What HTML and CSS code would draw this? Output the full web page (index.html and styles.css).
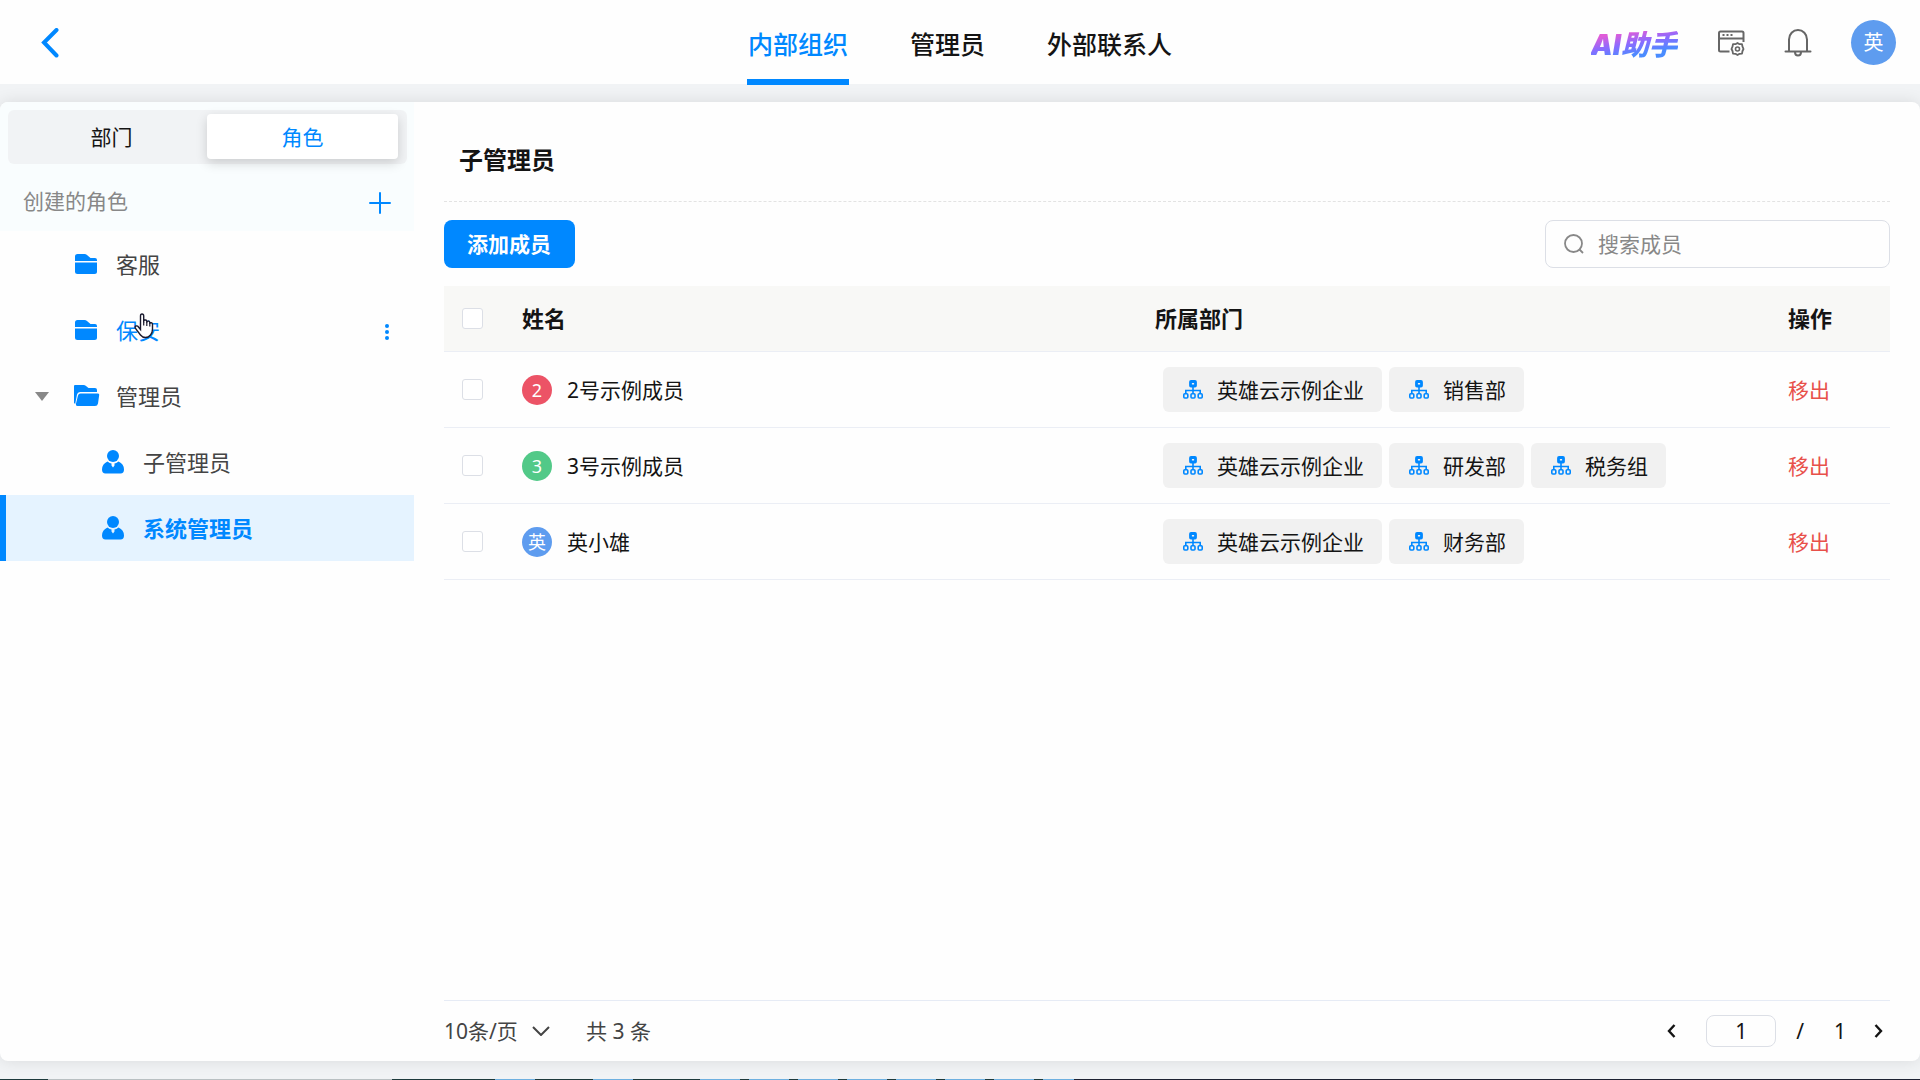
FILE: index.html
```html
<!DOCTYPE html>
<html lang="zh-CN">
<head>
  <meta charset="UTF-8">
  <meta name="viewport" content="width=device-width, initial-scale=1.0">
  <title>内部组织</title>
  <link rel="stylesheet" href="styles.css">
</head>
<body>
  <!-- shared icons -->
  <svg class="sprite" aria-hidden="true">
    <symbol id="icon-folder" viewBox="0 0 24 20">
      <path d="M1 7V2.500Q1 0 3.500 0H10.500Q12 0 13 1L16.500 4H21Q23 4 23 6V7Z"/>
      <path d="M1 8.500H23V17.500Q23 20 20.500 20H3.500Q1 20 1 17.500Z"/>
    </symbol>
    <symbol id="icon-folder-open" viewBox="0 0 26 22">
      <path d="M0 18V1Q0 0 1 0H9.500Q11 0 12 1L14.500 3H21Q23 3 23 5V7H6Q3.500 7 3 9.500L1.200 19Z"/>
      <path d="M6.500 8.500H24Q25.500 8.500 25.200 10L24 18.500Q23.500 21 21 21H3.500Q1.500 21 1.900 19L4 10.500Q4.500 8.500 6.500 8.500Z"/>
    </symbol>
    <symbol id="icon-user" viewBox="0 0 22 24">
      <circle cx="11" cy="6" r="6"/>
      <path d="M5.500 11.500Q8 13.500 9.500 13.500L9.500 15.500L11 17.500L12.500 15.500V13.500Q14 13.500 16.500 11.500Q22 14 22 19.500Q22 23.500 18.500 23.500H3.500Q0 23.500 0 19.500Q0 14 5.500 11.500Z"/>
    </symbol>
    <symbol id="icon-org" viewBox="0 0 20 19">
      <g fill="none" stroke="currentColor" stroke-width="1.600">
        <rect x="7.500" y="1.500" width="5" height="4.500" rx="0.500" stroke-width="2.800"/>
        <path d="M10 7V13.500M2.800 13.500V10.500H17.200V13.500"/>
        <rect x="0.800" y="13.800" width="4" height="4.200" rx="1"/>
        <rect x="8" y="13.800" width="4" height="4.200" rx="1"/>
        <rect x="15.200" y="13.800" width="4" height="4.200" rx="1"/>
      </g>
    </symbol>
  </svg>

  <header class="topbar">
    <button class="icon-btn back-btn" aria-label="返回">
      <svg width="18" height="30" viewBox="0 0 18 30"><path d="M15.500 2L3 14.500L15.500 27.500" fill="none" stroke="currentColor" stroke-width="4" stroke-linecap="round"/></svg>
    </button>
    <nav class="main-nav">
      <a href="#" class="active">内部组织</a>
      <a href="#">管理员</a>
      <a href="#">外部联系人</a>
    </nav>
    <div class="tools">
      <a href="#" class="ai-link">AI助手</a>
      <button class="icon-btn" aria-label="应用设置">
        <svg width="28" height="26" viewBox="0 0 28 26" fill="none" stroke="currentColor" stroke-width="2">
          <path d="M12.500 21.500H3.500Q2 21.500 2 20V3Q2 1.500 3.500 1.500H25Q26.500 1.500 26.500 3V12M2 8.500H26.500"/>
          <path d="M5.500 5H7.500M9.500 5H11.500M13.500 5H15.500"/>
          <path d="M20.500 13L22.500 14.200L25 14.200L25.500 16.600L26.500 19L25.500 21L25 23.600L22.500 23.800L20.500 25L18.500 23.800L16 23.600L15.500 21L14.500 19L15.500 16.600L16 14.200L18.500 14.200Z" stroke-linejoin="round" stroke-width="1.800"/>
          <circle cx="20.500" cy="19" r="2" stroke-width="1.600"/>
        </svg>
      </button>
      <button class="icon-btn" aria-label="通知">
        <svg width="28" height="29" viewBox="0 0 28 29" fill="none" stroke="currentColor" stroke-width="2" stroke-linecap="round">
          <path d="M5 23V11.500A9 9.500 0 0 1 23 11.500V23M1.500 23.500H26.500M11 24Q11 27.500 14 27.500Q17 27.500 17 24"/>
        </svg>
      </button>
      <button class="avatar avatar-lg blue">英</button>
    </div>
  </header>

  <main class="panel">
    <aside class="sidebar">
      <div class="side-head">
        <div class="switch">
          <button>部门</button>
          <button class="active">角色</button>
        </div>
        <div class="side-title">
          <span>创建的角色</span>
          <button class="icon-btn" aria-label="新建角色">
            <svg width="22" height="22" viewBox="0 0 22 22"><path d="M11 1V21M1 11H21" stroke="currentColor" stroke-width="2" stroke-linecap="round"/></svg>
          </button>
        </div>
      </div>
      <ul class="tree">
        <li class="node">
          <svg class="folder"><use href="#icon-folder"/></svg>
          <a href="#">客服</a>
        </li>
        <li class="node hover">
          <svg class="folder"><use href="#icon-folder"/></svg>
          <a href="#">保安</a>
          <button class="icon-btn more" aria-label="更多">
            <svg width="6" height="18" viewBox="0 0 6 18" fill="currentColor"><circle cx="3" cy="3" r="2"/><circle cx="3" cy="9" r="2"/><circle cx="3" cy="15" r="2"/></svg>
          </button>
          <svg class="cursor" width="20" height="26" viewBox="0 0 20 26">
            <path d="M6.500 14V3Q6.500 1 8 1Q9.700 1 9.700 3V9.500V7.500Q12.500 6 12.800 8.500V10V8.500Q15.500 7.300 15.800 9.500V11V10Q18.300 9 18.500 11.500V16Q18.500 20 16.500 22Q14.500 24.500 11.500 24.500Q8.500 24.500 6.500 22L1.500 15.500Q0.500 13.500 2 13Q3.500 12.500 4.500 14L6.500 16.500Z" fill="#fff" stroke="#1b1b2f" stroke-width="1.400"/>
            <path d="M9.700 9V12.500M12.800 9.500V13M15.800 10.500V13.500" stroke="#1b1b2f" stroke-width="1.200"/>
          </svg>
        </li>
        <li class="node">
          <button class="icon-btn caret" aria-label="收起">
            <svg width="14" height="9" viewBox="0 0 14 9"><path d="M0 0H14L7 9Z" fill="currentColor"/></svg>
          </button>
          <svg class="folder-open"><use href="#icon-folder-open"/></svg>
          <a href="#">管理员</a>
        </li>
        <li class="node child">
          <svg class="user"><use href="#icon-user"/></svg>
          <a href="#">子管理员</a>
        </li>
        <li class="node child selected">
          <svg class="user"><use href="#icon-user"/></svg>
          <a href="#">系统管理员</a>
        </li>
      </ul>
    </aside>

    <section class="content">
      <h1>子管理员</h1>
      <div class="toolbar">
        <button class="primary-btn">添加成员</button>
        <label class="search">
          <svg width="20" height="20" viewBox="0 0 20 20" fill="none" stroke="currentColor" stroke-width="1.800"><circle cx="9.500" cy="9.500" r="8.500"/><path d="M15.500 15.500L19 19"/></svg>
          <input type="text" placeholder="搜索成员" aria-label="搜索成员">
        </label>
      </div>

      <table>
        <thead>
          <tr>
            <th class="col-check"><input type="checkbox" aria-label="全选"></th>
            <th>姓名</th>
            <th>所属部门</th>
            <th class="col-action">操作</th>
          </tr>
        </thead>
        <tbody>
          <tr>
            <td><input type="checkbox" aria-label="选择2号示例成员"></td>
            <td><div class="member"><span class="avatar red">2</span>2号示例成员</div></td>
            <td>
              <div class="tags">
                <span class="tag"><svg><use href="#icon-org"/></svg>英雄云示例企业</span>
                <span class="tag"><svg><use href="#icon-org"/></svg>销售部</span>
              </div>
            </td>
            <td><button class="remove">移出</button></td>
          </tr>
          <tr>
            <td><input type="checkbox" aria-label="选择3号示例成员"></td>
            <td><div class="member"><span class="avatar green">3</span>3号示例成员</div></td>
            <td>
              <div class="tags">
                <span class="tag"><svg><use href="#icon-org"/></svg>英雄云示例企业</span>
                <span class="tag"><svg><use href="#icon-org"/></svg>研发部</span>
                <span class="tag"><svg><use href="#icon-org"/></svg>税务组</span>
              </div>
            </td>
            <td><button class="remove">移出</button></td>
          </tr>
          <tr>
            <td><input type="checkbox" aria-label="选择英小雄"></td>
            <td><div class="member"><span class="avatar blue">英</span>英小雄</div></td>
            <td>
              <div class="tags">
                <span class="tag"><svg><use href="#icon-org"/></svg>英雄云示例企业</span>
                <span class="tag"><svg><use href="#icon-org"/></svg>财务部</span>
              </div>
            </td>
            <td><button class="remove">移出</button></td>
          </tr>
        </tbody>
      </table>

      <footer class="pager">
        <div class="page-size">
          <select aria-label="每页条数">
            <option>10条/页</option>
            <option>20条/页</option>
            <option>50条/页</option>
          </select>
          <svg width="18" height="10" viewBox="0 0 18 10"><path d="M1 1L9 9L17 1" fill="none" stroke="currentColor" stroke-width="2"/></svg>
        </div>
        <span class="total">共 3 条</span>
        <div class="pages">
          <button class="icon-btn" aria-label="上一页">
            <svg width="9" height="14" viewBox="0 0 9 14"><path d="M7.500 1L2 7L7.500 13" fill="none" stroke="currentColor" stroke-width="2.400"/></svg>
          </button>
          <input type="text" value="1" aria-label="页码">
          <span>/</span>
          <span class="count">1</span>
          <button class="icon-btn" aria-label="下一页">
            <svg width="9" height="14" viewBox="0 0 9 14"><path d="M1.500 1L7 7L1.500 13" fill="none" stroke="currentColor" stroke-width="2.400"/></svg>
          </button>
        </div>
      </footer>
    </section>
  </main>
  <div class="bottom-strip"></div>
</body>
</html>
```
FILE: styles.css
```css
* {
  box-sizing: border-box;
}
body {
  margin: 0;
  min-height: 100vh;
  display: flex;
  flex-direction: column;
  font-family: "Noto Sans", "Noto Sans CJK SC", sans-serif;
  font-size: 21px;
  line-height: 30px;
  color: #141414;
  background-color: #f1f3f5;
}
button, input, select {
  font: inherit;
  color: inherit;
}
button {
  border: none;
  background: none;
  padding: 0;
  cursor: pointer;
}
a {
  color: inherit;
  text-decoration: none;
}
.sprite {
  display: none;
}
.icon-btn {
  display: flex;
  align-items: center;
  justify-content: center;
}

/* top bar */
.topbar {
  height: 84px;
  display: grid;
  grid-template-columns: 1fr auto 1fr;
  align-items: center;
  padding: 0 24px 2px 41px;
  background-color: #fefefe;
}
.back-btn {
  justify-self: start;
  color: #0088ff;
}
.main-nav {
  display: flex;
  gap: 60px;
  align-self: start;
  font-size: 25px;
  font-weight: 500;
  padding-right: 17px;
}
.main-nav a {
  height: 85px;
  padding: 4px 1px 0;
  line-height: 80px;
}
.main-nav .active {
  color: #0088ff;
  border-bottom: 6px solid #0088ff;
}
.tools {
  display: flex;
  align-items: center;
  justify-content: flex-end;
  gap: 39px;
  color: #666;
}
.ai-link {
  padding: 4px 1px 0 0;
  font-family: "Inter", "Noto Sans CJK SC", sans-serif;
  font-size: 28px;
  font-style: italic;
  font-weight: 900;
  color: transparent;
  background: linear-gradient(170deg, #e05cd8 25%, #8b6bff 50%, #4a8cff 75%);
  background-clip: text;
  -webkit-background-clip: text;
}
.avatar {
  width: 30px;
  height: 30px;
  border-radius: 50%;
  display: flex;
  align-items: center;
  justify-content: center;
  color: #fff;
  font-size: 18px;
}
.avatar-lg {
  width: 45px;
  height: 45px;
  font-size: 20px;
}
.blue {
  background-color: #5e9cef;
}
.red {
  background-color: #ec5366;
}
.green {
  background-color: #52c988;
}

/* main panel */
.panel {
  flex: 1;
  display: flex;
  margin: 18px 0;
  background-color: #fefefe;
  border-radius: 8px;
  box-shadow: 0 0 16px rgba(0, 0, 0, 0.1);
}
.sidebar {
  width: 414px;
  flex-shrink: 0;
}
.side-head {
  padding: 8px 7px 0 8px;
  background-color: #f9fdfe;
  border-top-left-radius: 8px;
}
.switch {
  display: grid;
  grid-template-columns: 1fr 1fr;
  height: 54px;
  padding: 4px 9px 5px 8px;
  border-radius: 6px;
  background-color: #f1f3f5;
}
.switch button {
  border-radius: 4px;
}
.switch .active {
  color: #0088ff;
  background-color: #fff;
  box-shadow: 0 4px 12px rgba(0, 0, 0, 0.16);
}
.side-title {
  display: flex;
  align-items: center;
  justify-content: space-between;
  height: 67px;
  padding: 10px 16px 0 15px;
  color: #888;
}
.side-title span {
  padding-bottom: 3px;
}
.side-title .icon-btn {
  color: #0088ff;
}
.tree {
  list-style: none;
  margin: 0;
  padding: 0;
  font-size: 22px;
  color: #444;
}
.node {
  position: relative;
  display: flex;
  align-items: center;
  height: 66px;
  padding: 0 24px 0 74px;
}
.node svg {
  fill: currentColor;
}
.node > svg {
  color: #0088ff;
}
.node a {
  margin-left: 18px;
}
.node.child {
  padding-left: 102px;
}
.node.child a {
  margin-left: 19px;
}
.node.hover, .node.selected {
  color: #0088ff;
}
.node.selected {
  background-color: #e5f3ff;
  border-left: 6px solid #0088ff;
  padding-left: 96px;
  font-weight: bold;
}
.folder {
  width: 24px;
  height: 20px;
}
.folder-open {
  width: 26px;
  height: 22px;
  margin-right: -2px;
}
.user {
  width: 22px;
  height: 24px;
}
.more {
  margin-left: auto;
  padding-top: 3px;
}
.caret {
  color: #888;
  width: 14px;
  margin-left: -39px;
  margin-right: 25px;
}
.cursor {
  position: absolute;
  left: 134px;
  top: 16px;
}

/* content */
.content {
  flex: 1;
  min-width: 0;
  display: flex;
  flex-direction: column;
  padding: 0 30px;
}
h1 {
  margin: 0;
  padding: 42px 15px 25px;
  font-size: 24px;
  line-height: 32px;
  border-bottom: 1px dashed #e3e3e3;
}
.toolbar {
  display: flex;
  justify-content: space-between;
  padding: 18px 0;
}
.primary-btn {
  height: 48px;
  padding: 0 24px 0 23px;
  border-radius: 8px;
  background-color: #0088ff;
  color: #fff;
  font-weight: bold;
}
.search {
  display: flex;
  align-items: center;
  gap: 14px;
  width: 345px;
  height: 48px;
  padding: 0 18px;
  border: 1px solid #dcdfe6;
  border-radius: 8px;
  color: #888;
}
.search input {
  flex: 1;
  min-width: 0;
  padding: 0;
  border: none;
  outline: none;
  background: none;
}
.search input::placeholder {
  color: #888;
}
table {
  width: 100%;
  table-layout: fixed;
  border-collapse: separate;
  border-spacing: 0;
}
th, td {
  padding: 0;
  text-align: left;
  border-bottom: 1px solid #ebeef5;
}
th {
  height: 66px;
  padding-bottom: 2px;
  font-size: 22px;
  background-color: #f8f8f6;
}
td {
  height: 76px;
}
.col-check {
  width: 78px;
  padding-bottom: 0;
}
.col-action {
  width: 102px;
}
input[type="checkbox"] {
  appearance: none;
  display: block;
  width: 21px;
  height: 21px;
  margin: 0 0 0 18px;
  border: 1px solid #dcdfe6;
  border-radius: 3px;
  background-color: #fff;
}
.member {
  display: flex;
  align-items: center;
  gap: 15px;
}
.tags {
  display: flex;
  gap: 7px;
  padding-left: 8px;
}
.tag {
  display: flex;
  align-items: center;
  gap: 14px;
  height: 45px;
  padding: 0 18px 0 20px;
  border-radius: 6px;
  background-color: #f1f1f1;
  white-space: nowrap;
}
.tag svg {
  width: 20px;
  height: 19px;
  color: #0088ff;
}
.remove {
  color: #e8504a;
}

/* pagination */
.pager {
  display: flex;
  align-items: center;
  height: 61px;
  margin-top: auto;
  border-top: 1px solid #e6ebf5;
  color: #444;
}
.page-size {
  position: relative;
}
.page-size select {
  appearance: none;
  width: 108px;
  padding: 0;
  border: none;
  outline: none;
  background: none;
}
.page-size svg {
  position: absolute;
  right: 2px;
  top: 10px;
  pointer-events: none;
}
.total {
  margin-left: 34px;
}
.pages {
  display: flex;
  align-items: center;
  margin-left: auto;
  padding-right: 7px;
  color: #141414;
}
.pages input {
  width: 70px;
  height: 32px;
  margin: 0 20px 0 30px;
  padding: 0;
  text-align: center;
  border: 1px solid #dcdfe6;
  border-radius: 8px;
  background: none;
}
.count {
  margin: 0 28px 0 30px;
}
.bottom-strip {
  height: 1px;
  background:
    linear-gradient(90deg, #1d3a3c 48px, #b9c0c2 48px 392px, #1d3a3c 392px 495px, #6eb0e0 495px 535px, #1d3a3c 535px 593px, #6eb0e0 593px 633px, #1d3a3c 633px 691px, transparent 691px 1074px, #1d2233 1074px),
    repeating-linear-gradient(90deg, #6eb0e0 0 5px, #1d3a3c 5px 14px, #6eb0e0 14px 49px);
}
```
